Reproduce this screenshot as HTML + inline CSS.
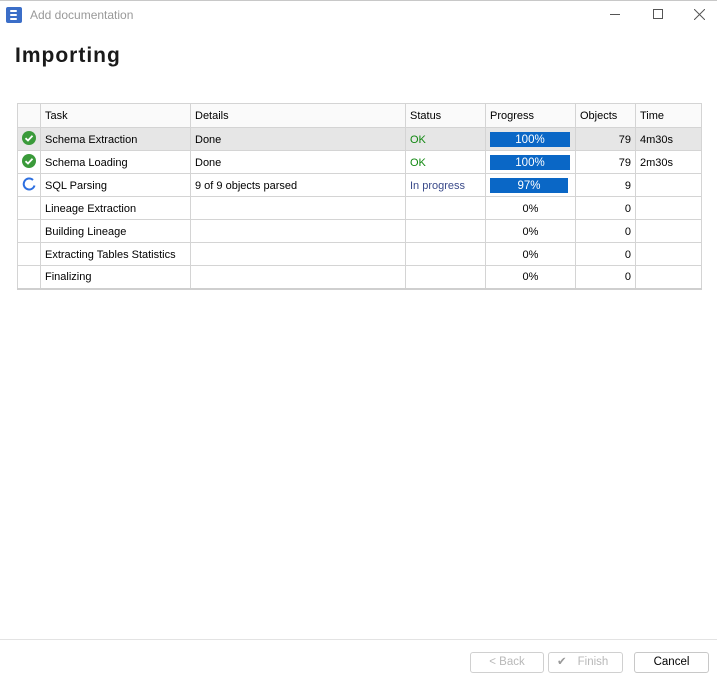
<!DOCTYPE html>
<html><head><style>
*{margin:0;padding:0;box-sizing:border-box}
body{width:717px;height:683px;background:#fff;font-family:"Liberation Sans",sans-serif;font-size:11px;color:#000;position:relative;overflow:hidden}
.top{position:absolute;left:0;top:0;width:717px;height:1px;background:#c8c8c8}
.ttl{position:absolute;left:30px;top:8px;color:#999;font-size:12px}
.ico{position:absolute;left:6px;top:7px;width:16px;height:16px;background:#3b6ec8;border-radius:2px}
.ico i{position:absolute;left:4px;width:7px;height:2px;background:#fff;border-radius:1px}
h1{position:absolute;left:15px;top:44px;font-size:21px;font-weight:bold;color:#1a1a1a;letter-spacing:1px}
table{position:absolute;left:17px;top:103px;border-collapse:collapse;border:1px solid #cfcfcf;border-bottom:2px solid #cfcfcf}
td{border:1px solid #d4d4d4;height:23px;padding:1px 4px 0;white-space:nowrap;vertical-align:middle}
tr.h td{background:#fafafa;height:24px}
tr.sel td{background:#e6e6e6}
.ok{color:#118811}.ip{color:#3a4a8a}
.r{text-align:right}.c{text-align:center}
.bar{width:80px;height:15px;background:#0a67c6;color:#fff;text-align:center;line-height:16px;font-size:11.5px}
.btn{position:absolute;top:652px;height:21px;border:1px solid #d0d0d0;border-radius:3px;text-align:center;line-height:19px;color:#b8b8b8;font-size:11.5px}
.ctl{position:absolute;top:9px;color:#555}
</style></head><body>
<div class="top"></div>
<div class="ico"><i style="top:3px"></i><i style="top:7px"></i><i style="top:11px"></i></div>
<div class="ttl">Add documentation</div>
<div class="ctl" style="left:610px;top:14px;width:10px;height:1px;background:#555"></div>
<div class="ctl" style="left:653px;width:10px;height:10px;border:1px solid #555"></div>
<svg class="ctl" style="left:694px" width="11" height="11"><path d="M0 0L11 11M11 0L0 11" stroke="#555" stroke-width="1"/></svg>
<h1>Importing</h1>
<table>
<colgroup><col style="width:23px"><col style="width:150px"><col style="width:215px"><col style="width:80px"><col style="width:90px"><col style="width:60px"><col style="width:66px"></colgroup>
<tr class="h"><td></td><td>Task</td><td>Details</td><td>Status</td><td>Progress</td><td>Objects</td><td>Time</td></tr>
<tr class="sel"><td><svg width="14" height="14"><circle cx="7" cy="7" r="7" fill="#3a9a3a"/><path d="M3.5 7.2L6 9.5L10.5 4.8" stroke="#fff" stroke-width="1.8" fill="none"/></svg></td><td>Schema Extraction</td><td>Done</td><td class="ok">OK</td><td><div class="bar">100%</div></td><td class="r">79</td><td>4m30s</td></tr>
<tr><td><svg width="14" height="14"><circle cx="7" cy="7" r="7" fill="#3a9a3a"/><path d="M3.5 7.2L6 9.5L10.5 4.8" stroke="#fff" stroke-width="1.8" fill="none"/></svg></td><td>Schema Loading</td><td>Done</td><td class="ok">OK</td><td><div class="bar">100%</div></td><td class="r">79</td><td>2m30s</td></tr>
<tr><td><svg width="14" height="14"><path d="M11 3A5.5 5.5 0 1 0 12.5 8.5" stroke="#2d6fe0" stroke-width="2" fill="none"/></svg></td><td>SQL Parsing</td><td>9 of 9 objects parsed</td><td class="ip">In progress</td><td><div class="bar" style="width:78px">97%</div></td><td class="r">9</td><td></td></tr>
<tr><td></td><td>Lineage Extraction</td><td></td><td></td><td class="c">0%</td><td class="r">0</td><td></td></tr>
<tr><td></td><td>Building Lineage</td><td></td><td></td><td class="c">0%</td><td class="r">0</td><td></td></tr>
<tr><td></td><td>Extracting Tables Statistics</td><td></td><td></td><td class="c">0%</td><td class="r">0</td><td></td></tr>
<tr><td></td><td>Finalizing</td><td></td><td></td><td class="c">0%</td><td class="r">0</td><td></td></tr>
</table>
<div style="position:absolute;left:0;top:639px;width:717px;height:1px;background:#e3e3e3"></div>
<div class="btn" style="left:470px;width:74px">&lt; Back</div>
<div class="btn" style="left:548px;width:75px"><span style="position:absolute;left:8px;color:#999">✔</span><span style="margin-left:15px">Finish</span></div>
<div class="btn" style="left:634px;width:75px;color:#000;border-color:#c8c8c8">Cancel</div>
</body></html>
